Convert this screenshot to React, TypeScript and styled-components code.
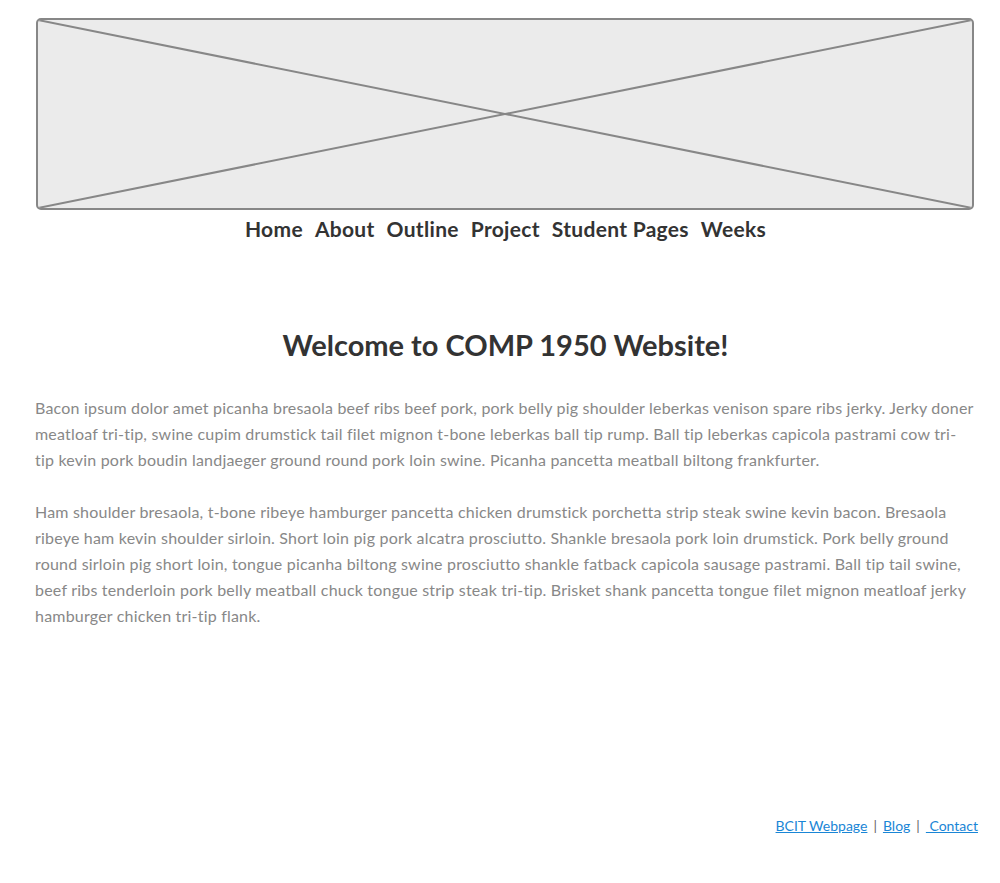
import React from "react";
import styled, { createGlobalStyle } from "styled-components";

const Global = createGlobalStyle`
  html, body { margin: 0; padding: 0; background: #fff; }
  body { font-family: Lato, "Liberation Sans", sans-serif; }
`;

const Page = styled.div`
  width: 943px;
  padding: 18px 0 0 35px;
  display: flex;
  flex-direction: column;
`;

const Banner = styled.div`
  margin-left: 1px;
  width: 934px;
  height: 188px;
  border: 2px solid #878787;
  border-radius: 5px;
  background: #ebebeb;
  overflow: hidden;
  svg { display: block; width: 100%; height: 100%; }
`;

const Nav = styled.nav`
  display: flex;
  justify-content: center;
  gap: 12px;
  margin-top: 5px;
  padding-right: 2px;
`;

const NavLink = styled.a`
  font-family: Lato, sans-serif;
  font-weight: 700;
  font-size: 21px;
  line-height: 28px;
  letter-spacing: 0.3px;
  color: #333;
  text-decoration: none;
`;

const Title = styled.h1`
  margin: 82px 0 0;
  text-align: center;
  font-family: Lato, sans-serif;
  font-weight: 700;
  font-size: 29px;
  line-height: 40px;
  color: #333;
  padding-right: 2px;
`;

const Text = styled.p`
  margin: 30px 0 0;
  padding-right: 3px;
  font-size: 16px;
  line-height: 26px;
  letter-spacing: 0.2px;
  color: #888;
  & + & { margin-top: 26px; }
`;

const Footer = styled.footer`
  margin-top: 187px;
  display: flex;
  justify-content: flex-end;
  align-items: baseline;
  font-size: 14px;
  line-height: 20px;
  color: #666;
`;

const FootLink = styled.a`
  color: #1a86d6;
  text-decoration: underline;
`;

const Sep = styled.span`
  margin: 0 6px;
`;

export default function App() {
  return (
    <>
      <Global />
      <Page>
        <Banner>
          <svg viewBox="0 0 934 188" preserveAspectRatio="none">
            <line x1="0" y1="0" x2="934" y2="188" stroke="#878787" strokeWidth="2" />
            <line x1="934" y1="0" x2="0" y2="188" stroke="#878787" strokeWidth="2" />
          </svg>
        </Banner>
        <Nav>
          {["Home", "About", "Outline", "Project", "Student Pages", "Weeks"].map((n) => (
            <NavLink key={n} href="#">{n}</NavLink>
          ))}
        </Nav>
        <Title>Welcome to COMP 1950 Website!</Title>
        <Text>
          Bacon ipsum dolor amet picanha bresaola beef ribs beef pork, pork belly pig shoulder leberkas venison spare ribs jerky. Jerky doner meatloaf tri-tip, swine cupim drumstick tail filet mignon t-bone leberkas ball tip rump. Ball tip leberkas capicola pastrami cow tri-tip kevin pork boudin landjaeger ground round pork loin swine. Picanha pancetta meatball biltong frankfurter.
        </Text>
        <Text>
          Ham shoulder bresaola, t-bone ribeye hamburger pancetta chicken drumstick porchetta strip steak swine kevin bacon. Bresaola ribeye ham kevin shoulder sirloin. Short loin pig pork alcatra prosciutto. Shankle bresaola pork loin drumstick. Pork belly ground round sirloin pig short loin, tongue picanha biltong swine prosciutto shankle fatback capicola sausage pastrami. Ball tip tail swine, beef ribs tenderloin pork belly meatball chuck tongue strip steak tri-tip. Brisket shank pancetta tongue filet mignon meatloaf jerky hamburger chicken tri-tip flank.
        </Text>
        <Footer>
          <FootLink href="#">BCIT Webpage</FootLink>
          <Sep>|</Sep>
          <FootLink href="#">Blog</FootLink>
          <Sep>|</Sep>
          <FootLink href="#">&nbsp;Contact</FootLink>
        </Footer>
      </Page>
    </>
  );
}
